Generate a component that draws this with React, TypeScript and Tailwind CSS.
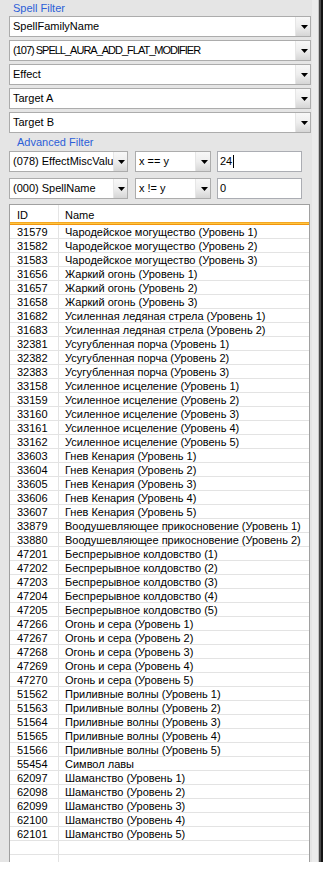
import React from "react";

const rows: [string, string][] = [
  ["31579", "Чародейское могущество (Уровень 1)"],
  ["31582", "Чародейское могущество (Уровень 2)"],
  ["31583", "Чародейское могущество (Уровень 3)"],
  ["31656", "Жаркий огонь (Уровень 1)"],
  ["31657", "Жаркий огонь (Уровень 2)"],
  ["31658", "Жаркий огонь (Уровень 3)"],
  ["31682", "Усиленная ледяная стрела (Уровень 1)"],
  ["31683", "Усиленная ледяная стрела (Уровень 2)"],
  ["32381", "Усугубленная порча (Уровень 1)"],
  ["32382", "Усугубленная порча (Уровень 2)"],
  ["32383", "Усугубленная порча (Уровень 3)"],
  ["33158", "Усиленное исцеление (Уровень 1)"],
  ["33159", "Усиленное исцеление (Уровень 2)"],
  ["33160", "Усиленное исцеление (Уровень 3)"],
  ["33161", "Усиленное исцеление (Уровень 4)"],
  ["33162", "Усиленное исцеление (Уровень 5)"],
  ["33603", "Гнев Кенария (Уровень 1)"],
  ["33604", "Гнев Кенария (Уровень 2)"],
  ["33605", "Гнев Кенария (Уровень 3)"],
  ["33606", "Гнев Кенария (Уровень 4)"],
  ["33607", "Гнев Кенария (Уровень 5)"],
  ["33879", "Воодушевляющее прикосновение (Уровень 1)"],
  ["33880", "Воодушевляющее прикосновение (Уровень 2)"],
  ["47201", "Беспрерывное колдовство (1)"],
  ["47202", "Беспрерывное колдовство (2)"],
  ["47203", "Беспрерывное колдовство (3)"],
  ["47204", "Беспрерывное колдовство (4)"],
  ["47205", "Беспрерывное колдовство (5)"],
  ["47266", "Огонь и сера (Уровень 1)"],
  ["47267", "Огонь и сера (Уровень 2)"],
  ["47268", "Огонь и сера (Уровень 3)"],
  ["47269", "Огонь и сера (Уровень 4)"],
  ["47270", "Огонь и сера (Уровень 5)"],
  ["51562", "Приливные волны (Уровень 1)"],
  ["51563", "Приливные волны (Уровень 2)"],
  ["51564", "Приливные волны (Уровень 3)"],
  ["51565", "Приливные волны (Уровень 4)"],
  ["51566", "Приливные волны (Уровень 5)"],
  ["55454", "Символ лавы"],
  ["62097", "Шаманство (Уровень 1)"],
  ["62098", "Шаманство (Уровень 2)"],
  ["62099", "Шаманство (Уровень 3)"],
  ["62100", "Шаманство (Уровень 4)"],
  ["62101", "Шаманство (Уровень 5)"],
  ["", ""],
  ["", ""],
];

function Arrow() {
  return (
    <svg width="7" height="4" viewBox="0 0 7 4">
      <path d="M0 0h7L3.5 4z" fill="#000" />
    </svg>
  );
}

function Combo({
  text,
  width,
  button = 15,
  textClass = "",
}: {
  text: string;
  width: string;
  button?: number;
  textClass?: string;
}) {
  return (
    <div className={`flex h-[21px] shrink-0 border border-[#acacac] bg-white ${width}`}>
      <div className={`flex flex-1 items-center overflow-hidden whitespace-nowrap pl-[3px] ${textClass}`}>{text}</div>
      <div
        className={`flex items-center justify-center border-l border-[#e6e6e6] bg-gradient-to-b from-[#f8f8f8] via-[#eeeeee] to-[#d6d6d6] pl-[2px] ${
          button === 14 ? "w-[14px]" : "w-[15px]"
        }`}
      >
        <Arrow />
      </div>
    </div>
  );
}

function TextBox({ children }: { children: React.ReactNode }) {
  return (
    <div className="flex h-[21px] w-[85px] shrink-0 items-center border border-[#abadb3] bg-white pl-[2px]">
      {children}
    </div>
  );
}

export default function App() {
  return (
    <div className="h-[873px] w-[323px] bg-white font-['Liberation_Sans',Arial,sans-serif] text-[11px] text-black">
      <div className="flex h-[862px] overflow-hidden">
        <div className="flex w-[312px] flex-col bg-[#e5e5e5] pl-[9px]">
          <div className="h-[16px] pl-[4px] pt-[1px] leading-[14px] text-[#2c5fd8]">Spell Filter</div>

          <div className="flex flex-col gap-[3px]">
            <Combo text="SpellFamilyName" width="w-[302px]" />
            <Combo text="(107) SPELL_AURA_ADD_FLAT_MODIFIER" width="w-[302px]" textClass="tracking-[-1px]" />
            <Combo text="Effect" width="w-[302px]" />
            <Combo text="Target A" width="w-[302px]" />
            <Combo text="Target B" width="w-[302px]" />
          </div>

          <div className="mb-[2px] mt-[2px] h-[14px] pl-[8px] leading-[14px] text-[#2c5fd8]">Advanced Filter</div>

          <div className="flex flex-col gap-[6px]">
            <div className="flex">
              <Combo text="(078) EffectMiscValue" width="w-[119px]" button={14} />
              <div className="ml-[7px]">
                <Combo text="x == y" width="w-[76px]" />
              </div>
              <div className="ml-[6px]">
                <TextBox>
                  <span>24</span>
                  <span className="ml-[1px] h-[13px] w-[1px] bg-black" />
                </TextBox>
              </div>
            </div>
            <div className="flex">
              <Combo text="(000) SpellName" width="w-[119px]" button={14} />
              <div className="ml-[7px]">
                <Combo text="x != y" width="w-[76px]" />
              </div>
              <div className="ml-[6px]">
                <TextBox>
                  <span>0</span>
                </TextBox>
              </div>
            </div>
          </div>

          <div className="mt-[5px] flex min-h-0 w-[301px] flex-1 flex-col overflow-hidden border-x border-t border-[#a0a0a0] bg-white">
            <div className="flex h-[17px] shrink-0">
              <div className="w-[49px] border-r border-[#e5e5e5] pl-[7px] pt-[4px] leading-[13px]">ID</div>
              <div className="flex-1 pl-[6px] pt-[4px] leading-[13px]">Name</div>
            </div>
            <div className="h-[1px] shrink-0 bg-[#f5a623]" />
            <div className="h-[1px] shrink-0 bg-[#fcc640]" />
            <div className="h-[1px] shrink-0 bg-[#f2940f]" />
            {rows.map(([id, name], i) => (
              <div key={i} className="flex h-[14px] shrink-0 border-b border-[#e3e3e3]">
                <div className="h-[13px] w-[49px] border-r border-[#e3e3e3] pl-[7px] leading-[15px]">{id}</div>
                <div className="h-[13px] flex-1 whitespace-nowrap pl-[6px] leading-[15px]">{name}</div>
              </div>
            ))}
          </div>
        </div>
        <div className="w-[6px] bg-[#ececec]" />
        <div className="w-[1px] bg-[#c4c4c4]" />
        <div className="w-[2px] bg-[#4a4a4a]" />
        <div className="w-[2px] bg-[#141414]" />
      </div>
    </div>
  );
}
